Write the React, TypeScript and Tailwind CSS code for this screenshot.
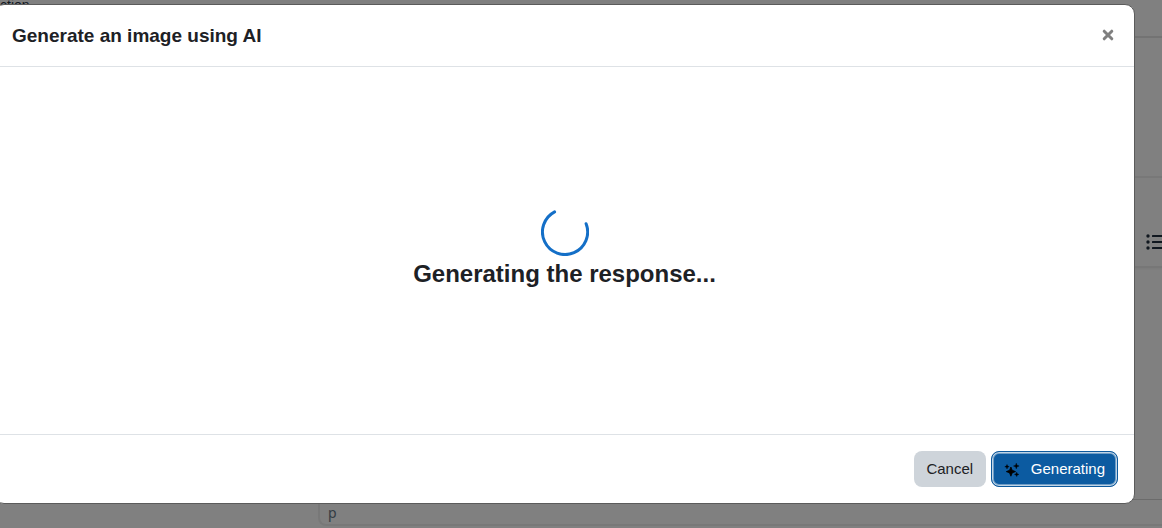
import React from "react";

function Spinner() {
  return (
    <svg className="size-12" viewBox="0 0 48 48" fill="none" role="status" aria-label="Loading">
      <path
        d="M13.6 3.9A22.6 22.6 0 1 0 45.1 15.7"
        stroke="#146fc7"
        strokeWidth="3"
        strokeLinecap="round"
      />
    </svg>
  );
}

function Sparkles() {
  return (
    <svg className="size-4" viewBox="0 0 16 16" fill="black" aria-hidden="true">
      <path d="M6.9 6L8.2 9.3L11.5 10.6L8.2 11.9L6.9 15.2L5.6 11.9L2.3 10.6L5.6 9.3Z" stroke="black" strokeWidth="0.8" strokeLinejoin="round" />
      <path d="M12.3 2.2L13 4.3L15.1 5L13 5.7L12.3 7.8L11.6 5.7L9.5 5L11.6 4.3Z" stroke="black" strokeWidth="0.4" strokeLinejoin="round" />
      <path d="M3 3.5L3.6 5.1L5.2 5.7L3.6 6.3L3 7.9L2.4 6.3L0.8 5.7L2.4 5.1Z" stroke="black" strokeWidth="0.4" strokeLinejoin="round" />
      <path d="M12.7 11.2L13.3 12.8L14.9 13.4L13.3 14L12.7 15.6L12.1 14L10.5 13.4L12.1 12.8Z" stroke="black" strokeWidth="0.4" strokeLinejoin="round" />
    </svg>
  );
}

function ListIcon() {
  return (
    <svg className="h-4 w-5" viewBox="0 0 20 16" fill="#10171f" aria-hidden="true">
      {[2, 8, 14].map((y) => (
        <g key={y}>
          <circle cx="2" cy={y} r="1.7" />
          <rect x="6" y={y - 1} width="14" height="2" rx="0.5" />
        </g>
      ))}
    </svg>
  );
}

function EditorPage() {
  return (
    <div className="flex h-full min-h-[528px] bg-[#808080] text-[#10171f]">
      <aside className="w-[318px] shrink-0">
        <p className="text-sm leading-[10px]">ction</p>
      </aside>
      <main className="flex min-w-0 flex-1 flex-col">
        <div className="h-[38px] shrink-0 border-b-2 border-[#737373]" />
        <div className="h-[140px] shrink-0 border-b-2 border-[#787878]" />
        <div className="flex h-[90px] shrink-0 items-center justify-end border-b-2 border-[#777777] pt-10 shadow-xs">
          <button type="button" aria-label="Bulleted list" className="-mr-1">
            <ListIcon />
          </button>
        </div>
        <div className="h-[231px] shrink-0" />
        <div className="h-[27px] rounded-bl-lg border-t border-b-2 border-l-2 border-t-[#6b6b6b] border-b-[#787878] border-l-[#787878] px-2 font-['Noto_Sans',sans-serif] text-sm leading-[26px] text-[#343c44]">
          p
        </div>
      </main>
    </div>
  );
}

export default function App() {
  return (
    <div className="relative min-h-screen overflow-hidden font-['Liberation_Sans',Arial,sans-serif]">
      <EditorPage />
      <div className="absolute inset-0 pt-1 pr-[27px]">
        <section
          role="dialog"
          aria-modal="true"
          aria-labelledby="dialog-title"
          className="-ml-1.5 rounded-[10px] border border-[#5b5b5b] bg-white text-[#1d2125]"
        >
          <header className="flex items-start justify-between border-b border-[#dee2e6] py-4 pr-4 pl-[17px]">
            <h1 id="dialog-title" className="text-[19px] leading-[29px] font-bold">
              Generate an image using AI
            </h1>
            <button type="button" aria-label="Close" className="mt-1 flex size-5 items-center justify-center text-[#7f7f7f]">
              <svg className="size-3" viewBox="0 0 12 12" stroke="currentColor" strokeWidth="3" strokeLinecap="round" aria-hidden="true">
                <path d="M2.2 2.2L9.8 9.8M9.8 2.2L2.2 9.8" />
              </svg>
            </button>
          </header>
          <div className="flex min-h-[367px] flex-col items-center justify-center pb-[1px]">
            <Spinner />
            <p className="text-2xl leading-9 font-bold">Generating the response...</p>
          </div>
          <footer className="flex justify-end gap-[5px] border-t border-[#dee2e6] p-4">
            <button type="button" className="h-9 w-[72px] rounded-lg bg-[#ced4da] text-[15px]">
              Cancel
            </button>
            <button
              type="button"
              className="flex h-9 items-center gap-[11px] rounded-lg border border-[#0c589c] bg-[#0c5ba1] px-3 text-[15px] text-white shadow-[inset_0_0_0_1px_#bfd4e6,inset_0_0_0_2px_#6f9dc6]"
            >
              <Sparkles />
              Generating
            </button>
          </footer>
        </section>
      </div>
    </div>
  );
}
